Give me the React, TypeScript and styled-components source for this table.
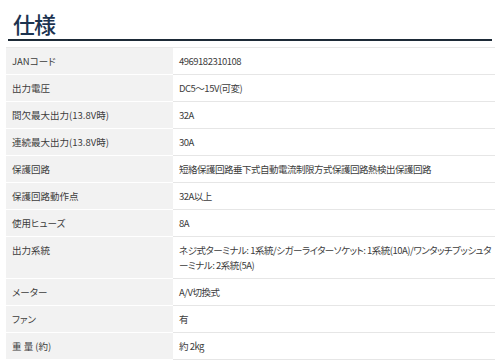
import styled, { createGlobalStyle } from "styled-components";

const GlobalStyle = createGlobalStyle`
  html, body {
    margin: 0;
    padding: 0;
    background: #ffffff;
  }
  body {
    font-family: "Noto Sans CJK JP", "Liberation Sans", sans-serif;
  }
`;

type Spec = { label: string; value: string };

const specs: Spec[] = [
  { label: "JANコード", value: "4969182310108" },
  { label: "出力電圧", value: "DC5〜15V(可変)" },
  { label: "間欠最大出力(13.8V時)", value: "32A" },
  { label: "連続最大出力(13.8V時)", value: "30A" },
  { label: "保護回路", value: "短絡保護回路垂下式自動電流制限方式保護回路熱検出保護回路" },
  { label: "保護回路動作点", value: "32A以上" },
  { label: "使用ヒューズ", value: "8A" },
  {
    label: "出力系統",
    value:
      "ネジ式ターミナル: 1系統/シガーライターソケット: 1系統(10A)/ワンタッチプッシュターミナル: 2系統(5A)",
  },
  { label: "メーター", value: "A/V切換式" },
  { label: "ファン", value: "有" },
  { label: "重 量 (約)", value: "約 2kg" },
];

function App() {
  return (
    <Wrapper>
      <GlobalStyle />
      <Header>
        <Title>仕様</Title>
      </Header>
      <SpecTable>
        <tbody>
          {specs.map((spec) => (
            <tr key={spec.label}>
              <Label>{spec.label}</Label>
              <Value>{spec.value}</Value>
            </tr>
          ))}
        </tbody>
      </SpecTable>
    </Wrapper>
  );
}

export default App;

const Wrapper = styled.div`
  width: 500px;
  padding: 0 5px 0 6px;
  box-sizing: border-box;
`;

const Header = styled.div`
  margin: 0 3px 0 2px;
  padding: 12px 0 5px 5px;
  border-bottom: 2px solid #1d2a37;
`;

const Title = styled.h2`
  margin: 0;
  font-size: 22px;
  line-height: 22px;
  font-weight: 500;
  color: #1c3350;
  letter-spacing: -1px;
`;

const SpecTable = styled.table`
  width: 100%;
  margin-top: 6px;
  border-collapse: separate;
  border-spacing: 0;
  border-top: 1px solid #e9e9e9;
  font-size: 9.5px;
  line-height: 15px;
  color: #3c3c3c;
  font-feature-settings: "palt" 1;
`;

const Label = styled.th`
  width: 155px;
  padding: 6px 6px 5px 6px;
  text-align: left;
  font-weight: 400;
  vertical-align: top;
  background: #f2f2f2;
  border-bottom: 1px solid #ffffff;
`;

const Value = styled.td`
  padding: 6px 2px 5px 6px;
  vertical-align: top;
  background: #ffffff;
  border-bottom: 1px solid #e6e6e6;
  letter-spacing: -0.5px;
`;
